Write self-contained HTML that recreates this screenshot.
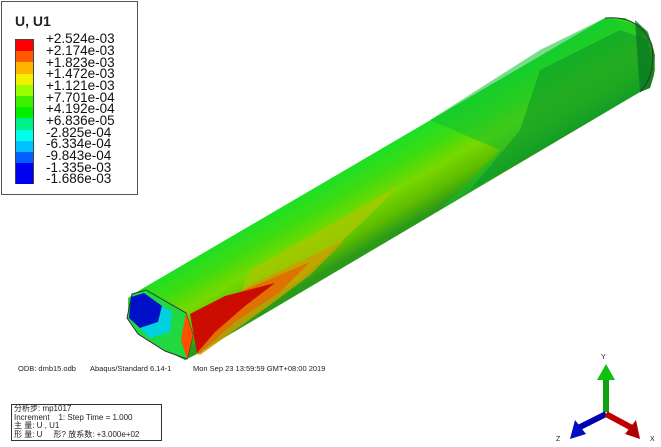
<!DOCTYPE html>
<html><head><meta charset="utf-8"><style>
body{margin:0;width:661px;height:447px;background:#fff;overflow:hidden;position:relative;font-family:"Liberation Sans","Noto Sans CJK SC",sans-serif}
.leg{position:absolute;left:1px;top:1px;width:137px;height:194px;border:1px solid #555;box-sizing:border-box}
.leg .t{position:absolute;left:13px;top:11px;font-size:14px;font-weight:bold;color:#222}
.leg .bar{position:absolute;left:13px;top:37px;width:19px;height:145px;border:1px solid #444;box-sizing:border-box}
.leg .bar div{height:11.2px}
.leg .lb{position:absolute;left:44px;font-size:13.5px;color:#111;line-height:12px}
.small{position:absolute;font-size:7.5px;color:#222;white-space:nowrap}
.info{position:absolute;left:11px;top:404px;width:151px;height:37px;border:1px solid #333;font-size:8px;line-height:8.6px;padding-left:2px;box-sizing:border-box;color:#222}
</style></head><body>
<div class="leg"><div class="t">U, U1</div>
<div class="bar">
<div style="background:#ff0000"></div><div style="background:#ff5a00"></div><div style="background:#ffb400"></div><div style="background:#f0f000"></div><div style="background:#9aff00"></div><div style="background:#3cf000"></div><div style="background:#00f000"></div><div style="background:#00f08a"></div><div style="background:#00ffe8"></div><div style="background:#00c0ff"></div><div style="background:#0060ff"></div><div style="background:#0000f0"></div><div style="background:#0000f0;height:10px"></div>
</div>
<div class="lb" style="top:31px">+2.524e-03</div>
<div class="lb" style="top:43px">+2.174e-03</div>
<div class="lb" style="top:55px">+1.823e-03</div>
<div class="lb" style="top:66px">+1.472e-03</div>
<div class="lb" style="top:78px">+1.121e-03</div>
<div class="lb" style="top:90px">+7.701e-04</div>
<div class="lb" style="top:101px">+4.192e-04</div>
<div class="lb" style="top:113px">+6.836e-05</div>
<div class="lb" style="top:125px">-2.825e-04</div>
<div class="lb" style="top:136px">-6.334e-04</div>
<div class="lb" style="top:148px">-9.843e-04</div>
<div class="lb" style="top:160px">-1.335e-03</div>
<div class="lb" style="top:171px">-1.686e-03</div>
</div>
<svg width="661" height="447" style="position:absolute;left:0;top:0">
<defs>
<linearGradient id="g" x1="385" y1="145" x2="425" y2="215" gradientUnits="userSpaceOnUse">
<stop offset="0" stop-color="#18e028"/><stop offset="0.3" stop-color="#40dc10"/><stop offset="0.55" stop-color="#78d800"/><stop offset="0.8" stop-color="#5cbc00"/><stop offset="1" stop-color="#2a9a18"/>
</linearGradient>
</defs>
<polygon points="128,298 140,290 605,18 625,18 645,30 654,50 655,70 650,88 640,92 195,355 185,360 175,355 140,335 128,315" fill="url(#g)"/>
<polygon points="430,120 540,50 605,18 640,25 652,60 640,92 520,160 440,210 500,150" fill="#10c030" opacity="0.55"/>
<polygon points="540,70 620,30 648,40 652,70 640,92 560,138 470,190 520,130" fill="#0a9028" opacity="0.5"/>
<polygon points="250,270 330,225 400,185 370,215 300,280 230,320" fill="#a8c800" opacity="0.8"/>
<polygon points="195,325 250,285 345,240 310,275 270,305 200,355" fill="#c8a000" opacity="0.85"/>
<polygon points="192,320 240,292 310,262 280,292 235,322 198,355" fill="#e07000"/>
<polygon points="190,314 225,296 275,283 245,306 215,332 197,353" fill="#cc0c00"/>
<polygon points="635,20 648,32 655,55 654,75 650,88 640,92" fill="#087a20" opacity="0.8"/>
<path d="M605,18 Q640,15 652,45 Q656,75 640,92" fill="none" stroke="#333" stroke-width="1"/>
<polygon points="132,294 146,290 186,313 193,335 187,359 165,351 138,334 127,318" fill="#20d840" stroke="#333" stroke-width="1"/>
<polygon points="131,297 144,293 162,306 158,322 140,328 129,318" fill="#0010c8"/>
<polygon points="140,328 158,322 162,306 172,312 170,332 150,338" fill="#00d0e0"/>
<polygon points="186,313 193,335 187,359 181,340" fill="#ff5000"/>
<g font-family="Liberation Sans" font-size="7" fill="#222">
<text x="601" y="359">Y</text><text x="556" y="441">Z</text><text x="650" y="441">X</text>
</g>
<rect x="603" y="377" width="6" height="35" fill="#10a010"/>
<polygon points="597,380 606,364 615,380" fill="#10c010"/>
<line x1="606" y1="414" x2="578" y2="428" stroke="#0000b0" stroke-width="6"/>
<polygon points="570,439 575,420 586,434" fill="#0010c0"/>
<line x1="606" y1="414" x2="632" y2="428" stroke="#c00000" stroke-width="6"/>
<polygon points="640,439 625,434 636,420" fill="#b00000"/>
</svg>
<div class="small" style="left:18px;top:364px">ODB: dmb15.odb</div>
<div class="small" style="left:90px;top:364px">Abaqus/Standard 6.14-1</div>
<div class="small" style="left:193px;top:364px">Mon Sep 23 13:59:59 GMT+08:00 2019</div>
<div class="info">分析步: mp1017<br>Increment &nbsp;&nbsp;&nbsp;1: Step Time = 1.000<br>主 量: U , U1<br>形 量: U &nbsp;&nbsp;&nbsp;&nbsp;形? 放系数: +3.000e+02</div>
</body></html>
